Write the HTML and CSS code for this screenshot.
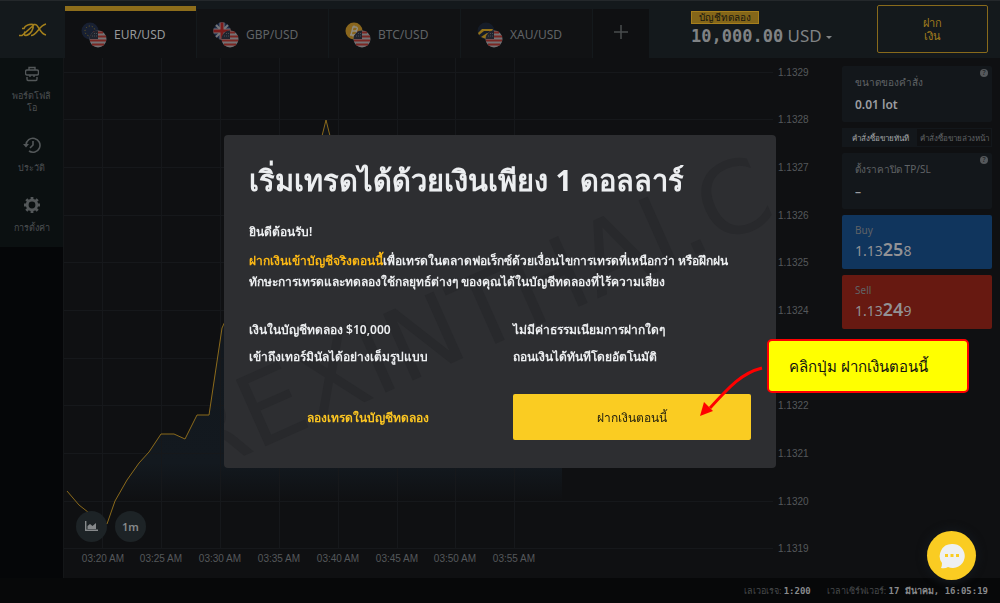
FILE: index.html
```html
<!DOCTYPE html>
<html lang="th">
<head>
    <meta charset="utf-8">
    <title>EUR/USD</title>
    <link rel="stylesheet" href="styles.css">
</head>
<body>
    <svg class="defs" width="0" height="0">
        <defs>
            <g id="usa">
                <circle cx="17" cy="17" r="8.5" fill="#747275"/>
                <path d="M12 10.5h10M9 14.5h16M9 18.5h16M11 22.5h12" stroke="#7a2622" stroke-width="2"/>
                <path d="M17 8.5A8.5 8.5 0 0 0 8.5 17H17z" fill="#20242e"/>
                <path d="M11 14h5M13 11.5h3" stroke="#4a4d55" stroke-dasharray="1 1"/>
            </g>
        </defs>
    </svg>

    <div class="app">
        <header class="header">
            <a href="#" class="logo" aria-label="Home">
                <svg width="30" height="14" viewBox="0 0 30 14" fill="none" stroke="#a4801c" stroke-width="1.6">
                    <path d="M1 12.5h3L17 1M4 5.5h2C7 2.5 11 1 15 1.5c1 4-2 10-7 11-2 0-2-2-1-4"/>
                    <path d="M13 12.5c6 0 8-10 15-11.5M17 1.5c4 0 4 9 11 10.5"/>
                </svg>
            </a>
            <nav class="tabs">
                <a href="#" class="tab active">
                    <svg width="26" height="26" viewBox="0 0 26 26"><circle cx="9" cy="9" r="8.5" fill="#182032"/><circle cx="9" cy="9" r="5" fill="none" stroke="#75631f" stroke-dasharray="1 2.1"/><use href="#usa"/></svg>
                    EUR/USD
                </a>
                <a href="#" class="tab">
                    <svg width="26" height="26" viewBox="0 0 26 26"><circle cx="9" cy="9" r="8.5" fill="#1c2845"/><path d="M3 3l12 12M15 3L3 15" stroke="#77777a" stroke-width="2"/><path d="M9 .5v17M.5 9h17" stroke="#77777a" stroke-width="5"/><path d="M9 .5v17M.5 9h17" stroke="#7c1b1a" stroke-width="3"/><use href="#usa"/></svg>
                    GBP/USD
                </a>
                <a href="#" class="tab">
                    <svg width="26" height="26" viewBox="0 0 26 26"><circle cx="9" cy="9" r="8.5" fill="#8a661d"/><path d="M8 5l-2 8M7.5 5h3c3 0 2 4-.5 4H7M10 9c3 0 2 4-1 4H5M9 3.5v2M8 12.5v2" fill="none" stroke="#8f8b80" stroke-width="1.4"/><use href="#usa"/></svg>
                    BTC/USD
                </a>
                <a href="#" class="tab">
                    <svg width="26" height="26" viewBox="0 0 26 26"><circle cx="9" cy="9" r="8.5" fill="#151c28"/><path d="M1 11l4-4h11l-1 2H7l-5 4zM4 15l6-4h4l-5 6z" fill="#947218"/><use href="#usa"/></svg>
                    XAU/USD
                </a>
                <button class="add" aria-label="Add">
                    <svg width="14" height="14"><path d="M7 0v14M0 7h14" stroke="#4a4c4e" stroke-width="1.5"/></svg>
                </button>
            </nav>
            <button class="account">
                <span class="badge">บัญชีทดลอง</span>
                <span class="balance"><b>10,000.00</b> USD <i class="caret"></i></span>
            </button>
            <button class="deposit">ฝาก<br>เงิน</button>
        </header>

        <div class="middle">
            <aside class="sidebar">
                <div class="menu">
                    <a href="#" class="item">
                        <svg width="14" height="16" viewBox="0 0 14 16" fill="none" stroke="#535759" stroke-width="1.4"><path d="M4 4V1.5h6V4M2 4h10q1.500 0 1.500 2v1q0 2-1.500 2H2Q.5 9 .5 7V6Q.5 4 2 4zM2 11v2q0 1.500 1 1.500h8q1 0 1-1.500v-2M5 9v2M9 9v2"/></svg>
                        <span>พอร์ตโฟลิ<br>โอ</span>
                    </a>
                    <a href="#" class="item">
                        <svg width="18" height="18" viewBox="0 0 18 18" fill="none" stroke="#535759" stroke-width="1.6"><path d="M3 9a7 7 0 1 1 3 6M10 5v4l-3 3"/><path d="M0 8h6l-3 3.5z" fill="#535759" stroke="none"/></svg>
                        <span>ประวัติ</span>
                    </a>
                    <a href="#" class="item">
                        <svg width="18" height="18" viewBox="0 0 18 18" fill="none" stroke="#535759"><circle cx="9" cy="9" r="4.8" stroke-width="2.8"/><path d="M9 1v3M9 14v3M1 9h3M14 9h3M3.300 3.300l2.200 2.200M12.500 12.500l2.200 2.200M3.300 14.700l2.200-2.200M12.500 5.500l2.200-2.200" stroke-width="2.8"/></svg>
                        <span>การตั้งค่า</span>
                    </a>
                </div>
            </aside>

            <main class="chart">
                <svg class="plot" width="100%" height="520">
                    <defs>
                        <linearGradient id="area" x1="0" y1="0" x2="0" y2="1">
                            <stop offset="0" stop-color="#10151b"/>
                            <stop offset=".9" stop-color="#13191f"/>
                            <stop offset="1" stop-color="#0f1012"/>
                        </linearGradient>
                    </defs>
                    <path d="M51 443L63 422 75 405 85 394 97 376H110L121 381 133 357H145L158 270 190 200 252 110 262 62 272 110 498 330V443z" fill="url(#area)"/>
                    <path class="grid" d="M38.5 0v490M97.5 0v490M156.5 0v490M215.5 0v490M274.5 0v490M333.5 0v490M391.5 0v490M450.5 0v490M0 14.5h709M0 61.5h709M0 109.5h709M0 157.5h709M0 204.5h709M0 252.5h709M0 300.5h709M0 347.5h709M0 395.5h709M0 443.5h709M0 490.5h709"/>
                    <path class="line" d="M3 433L15 447 29 458 43 466 51 443 63 422 75 405 85 394 97 376H110L121 381 133 357H145L158 270 190 200 252 110 258 78 262 62 266 78 272 110"/>
                    <g class="label">
                        <text x="714" y="18">1.1329</text>
                        <text x="714" y="65">1.1328</text>
                        <text x="714" y="113">1.1327</text>
                        <text x="714" y="161">1.1326</text>
                        <text x="714" y="208">1.1325</text>
                        <text x="714" y="256">1.1324</text>
                        <text x="714" y="351">1.1322</text>
                        <text x="714" y="399">1.1321</text>
                        <text x="714" y="447">1.1320</text>
                        <text x="714" y="494">1.1319</text>
                    </g>
                    <g class="label time">
                        <text x="39" y="504">03:20 AM</text>
                        <text x="97" y="504">03:25 AM</text>
                        <text x="156" y="504">03:30 AM</text>
                        <text x="215" y="504">03:35 AM</text>
                        <text x="274" y="504">03:40 AM</text>
                        <text x="333" y="504">03:45 AM</text>
                        <text x="391" y="504">03:50 AM</text>
                        <text x="450" y="504">03:55 AM</text>
                    </g>
                </svg>
                <div class="tools">
                    <button class="tool" aria-label="Chart type">
                        <svg width="13" height="10" viewBox="0 0 13 10"><path d="M.7 0v9.3H13" fill="none" stroke="#86898b" stroke-width="1.4"/><path d="M2.5 8V5L5 3l2.5 2L11 2v6z" fill="#86898b"/></svg>
                    </button>
                    <button class="tool">1m</button>
                </div>
            </main>

            <aside class="order">
                <label class="card">
                    <span class="name">ขนาดของคำสั่ง</span>
                    <input class="value" type="text" value="0.01 lot">
                    <span class="help">?</span>
                </label>
                <div class="switch">
                    <button class="on">คำสั่งซื้อขายทันที</button>
                    <button>คำสั่งซื้อขายล่วงหน้า</button>
                </div>
                <label class="card">
                    <span class="name">ตั้งราคาปิด TP/SL</span>
                    <input class="value" type="text" value="–">
                    <span class="help">?</span>
                </label>
                <button class="trade buy"><span>Buy</span><span class="price">1.13<b>25</b>8</span></button>
                <button class="trade sell"><span>Sell</span><span class="price">1.13<b>24</b>9</span></button>
            </aside>
        </div>

        <footer class="footer">
            <span>เลเวอเรจ: <b>1:200</b></span>
            <span>เวลาเซิร์ฟเวอร์: <b>17 มีนาคม, 16:05:19</b></span>
        </footer>
    </div>

    <div class="overlay">
        <div class="modal" role="dialog" aria-labelledby="title">
            <svg class="watermark" width="552" height="333" viewBox="0 0 552 333" aria-hidden="true">
                <text transform="translate(262 213) rotate(-24)">REXINTHAI.C</text>
            </svg>
            <h1 id="title">เริ่มเทรดได้ด้วยเงินเพียง 1 ดอลลาร์</h1>
            <p>ยินดีต้อนรับ!</p>
            <p><a href="#">ฝากเงินเข้าบัญชีจริงตอนนี้</a>เพื่อเทรดในตลาดฟอเร็กซ์ด้วยเงื่อนไขการเทรดที่เหนือกว่า หรือฝึกฝน<br>ทักษะการเทรดและทดลองใช้กลยุทธ์ต่างๆ ของคุณได้ในบัญชีทดลองที่ไร้ความเสี่ยง</p>
            <div class="columns">
                <span>เงินในบัญชีทดลอง $10,000</span>
                <span>ไม่มีค่าธรรมเนียมการฝากใดๆ</span>
                <span>เข้าถึงเทอร์มินัลได้อย่างเต็มรูปแบบ</span>
                <span>ถอนเงินได้ทันทีโดยอัตโนมัติ</span>
            </div>
            <div class="columns actions">
                <button class="demo">ลองเทรดในบัญชีทดลอง</button>
                <button class="real">ฝากเงินตอนนี้</button>
            </div>
            <div class="callout">คลิกปุ่ม ฝากเงินตอนนี้</div>
            <svg class="arrow" width="64" height="54" viewBox="0 0 64 54">
                <path d="M62 3C42 8 30 21 10 43" fill="none" stroke="#f00" stroke-width="3"/>
                <path d="M0 51l4-14 9 9z" fill="#f00"/>
            </svg>
        </div>
    </div>

    <button class="chat" aria-label="Chat">
        <svg width="26" height="26" viewBox="0 0 26 26"><path d="M13 1a12 12 0 1 1-4 23q-3 2-7 1 1-2 1-5A12 12 0 0 1 13 1z" fill="#eef0f2"/><path d="M6 12.5h3M11.5 12.5h3M17 12.5h3" stroke="#facc22" stroke-width="3"/></svg>
    </button>
</body>
</html>
```
FILE: styles.css
```css
* {
    box-sizing: border-box;
}
body {
    margin: 0;
    background: #050608;
    color: #606366;
    font: 10px/16px "Noto Sans", "Liberation Sans", sans-serif;
}
a {
    color: inherit;
    text-decoration: none;
}
button, input {
    font: inherit;
    color: inherit;
    background: none;
    border: 0;
    padding: 0;
}
button {
    cursor: pointer;
}
.defs {
    position: absolute;
}
.app {
    display: flex;
    flex-direction: column;
    min-height: 100vh;
}

/* header */
.header {
    display: flex;
    height: 58px;
    background: #14191c;
    border-top: 1px solid #24282b;
}
.logo {
    width: 65px;
    display: flex;
    align-items: center;
    justify-content: center;
}
.tabs {
    display: flex;
    padding-top: 5px;
    flex: 1;
}
.tab {
    width: 131px;
    margin-right: 1px;
    padding: 2px 0 0 16px;
    display: flex;
    align-items: center;
    gap: 7px;
    font-size: 12px;
    background: #111214;
    border-top: 3px solid #14191c;
}
.tab.active {
    color: #97999b;
    background: #0f1012;
    border-top: 5px solid #8d6d1b;
    padding-top: 0;
}
.add {
    width: 56px;
    background: #0f1012;
    border-top: 3px solid #14191c;
}
.account {
    display: flex;
    flex-direction: column;
    align-items: flex-start;
    padding-top: 10px;
    width: 186px;
}
.badge {
    padding: 0 7px;
    background: #846619;
    border: 1px solid #a67f1c;
    color: #17160f;
    font-size: 10px;
    line-height: 11px;
}
.balance {
    margin-top: 2px;
    font-size: 17px;
    line-height: 20px;
    color: #808385;
    white-space: nowrap;
}
.balance b {
    font-family: "DejaVu Sans Mono", monospace;
}
.caret {
    display: inline-block;
    vertical-align: middle;
    border: 3px solid transparent;
    border-top-color: #808385;
    border-bottom: 0;
}
.deposit {
    width: 111px;
    height: 48px;
    margin: 4px 12px 0 0;
    border: 1px solid #886a1b;
    border-radius: 2px;
    color: #a17c1d;
    font-size: 11px;
    line-height: 13px;
}

/* sidebar */
.middle {
    display: flex;
    flex: 1;
    background: #0f1012;
}
.sidebar {
    width: 64px;
    background: #050608;
    border-right: 1px solid #141618;
}
.menu {
    height: 189px;
    padding-top: 8px;
    background: #0b1011;
    display: flex;
    flex-direction: column;
    gap: 22px;
}
.item {
    display: flex;
    flex-direction: column;
    align-items: center;
    gap: 8px;
    font-size: 9px;
    line-height: 12px;
    text-align: center;
    color: #4b4f51;
}

/* chart */
.chart {
    flex: 1;
    position: relative;
}
.plot {
    display: block;
}
.grid {
    stroke: #16181b;
    fill: none;
}
.line {
    stroke: #8b6a1b;
    fill: none;
}
.label {
    fill: #55585b;
    font: 10px "Liberation Sans", sans-serif;
}
.time {
    text-anchor: middle;
}
.tools {
    position: absolute;
    left: 12px;
    bottom: 36px;
    display: flex;
    gap: 8px;
}
.tool {
    width: 31px;
    height: 31px;
    border-radius: 50%;
    background: #1d2326;
    color: #86898b;
    font-size: 11px;
    font-weight: 600;
}

/* order panel */
.order {
    width: 158px;
    padding: 8px 8px 0 0;
    display: flex;
    flex-direction: column;
    gap: 6px;
}
.card {
    position: relative;
    height: 56px;
    padding: 8px 13px;
    background: #13171b;
    border-radius: 2px;
}
.name {
    display: block;
}
.value {
    width: 100%;
    height: 20px;
    margin-top: 4px;
    color: #9b9da0;
    font-size: 12px;
    font-weight: 600;
}
.help {
    position: absolute;
    top: 3px;
    right: 4px;
    width: 8px;
    height: 8px;
    border-radius: 50%;
    background: #55585b;
    color: #13171b;
    font-size: 7px;
    line-height: 8px;
    text-align: center;
}
.switch {
    display: flex;
    height: 19px;
    border: 1px solid #13171b;
}
.switch button {
    flex: 1;
    font-size: 8px;
    white-space: nowrap;
}
.switch .on {
    background: #13171b;
    color: #a3a5a7;
}
.trade {
    height: 54px;
    padding: 0 13px;
    border-radius: 2px;
    text-align: left;
}
.trade span {
    display: block;
}
.buy {
    background: #10355d;
}
.sell {
    background: #671911;
}
.trade .price {
    font-size: 14px;
    line-height: 22px;
    color: #929295;
}
.price b {
    font-size: 18px;
    font-weight: 600;
}

/* footer */
.footer {
    height: 25px;
    padding-right: 12px;
    display: flex;
    justify-content: flex-end;
    align-items: center;
    gap: 16px;
    background: #070809;
    color: #46494b;
    font-size: 9px;
}
.footer b {
    color: #898b8d;
    font-family: "DejaVu Sans Mono", monospace;
}

/* welcome dialog */
.overlay {
    position: fixed;
    inset: 0;
    display: flex;
    align-items: center;
    justify-content: center;
}
.modal {
    position: relative;
    width: 552px;
    padding: 25px 25px 28px;
    background: #2d2e31;
    border-radius: 4px;
    color: #eceef0;
    font-size: 12px;
    font-weight: 600;
    line-height: 21px;
}
.modal > * {
    position: relative;
}
.modal .watermark {
    position: absolute;
    left: 0;
    top: 0;
    fill: #28292c;
    font: 100px "DejaVu Sans", sans-serif;
    text-anchor: middle;
}
h1 {
    margin: 0 0 21px;
    font-size: 29px;
    line-height: 40px;
}
p {
    margin: 0 0 8px;
}
p a {
    color: #fbb815;
}
.columns {
    margin-top: 27px;
    display: grid;
    grid-template-columns: 1fr 1fr;
    gap: 6px 26px;
}
.actions {
    margin-top: 27px;
}
.demo {
    color: #fbc522;
}
.real {
    height: 46px;
    background: #facc22;
    border-radius: 2px;
    color: #24210f;
    font-weight: 500;
}
.modal .callout {
    position: absolute;
    left: 543px;
    top: 204px;
    width: 202px;
    padding: 14px 20px;
    background: #ff0;
    border: 2px solid #f00;
    border-radius: 5px;
    color: #111;
    font-size: 15px;
    font-weight: normal;
    line-height: 22px;
}
.modal .arrow {
    position: absolute;
    left: 476px;
    top: 230px;
}
.chat {
    position: fixed;
    right: 24px;
    bottom: 23px;
    width: 49px;
    height: 49px;
    border-radius: 50%;
    background: #facc22;
    box-shadow: 0 0 6px 4px #121519;
    display: flex;
    align-items: center;
    justify-content: center;
}
```
